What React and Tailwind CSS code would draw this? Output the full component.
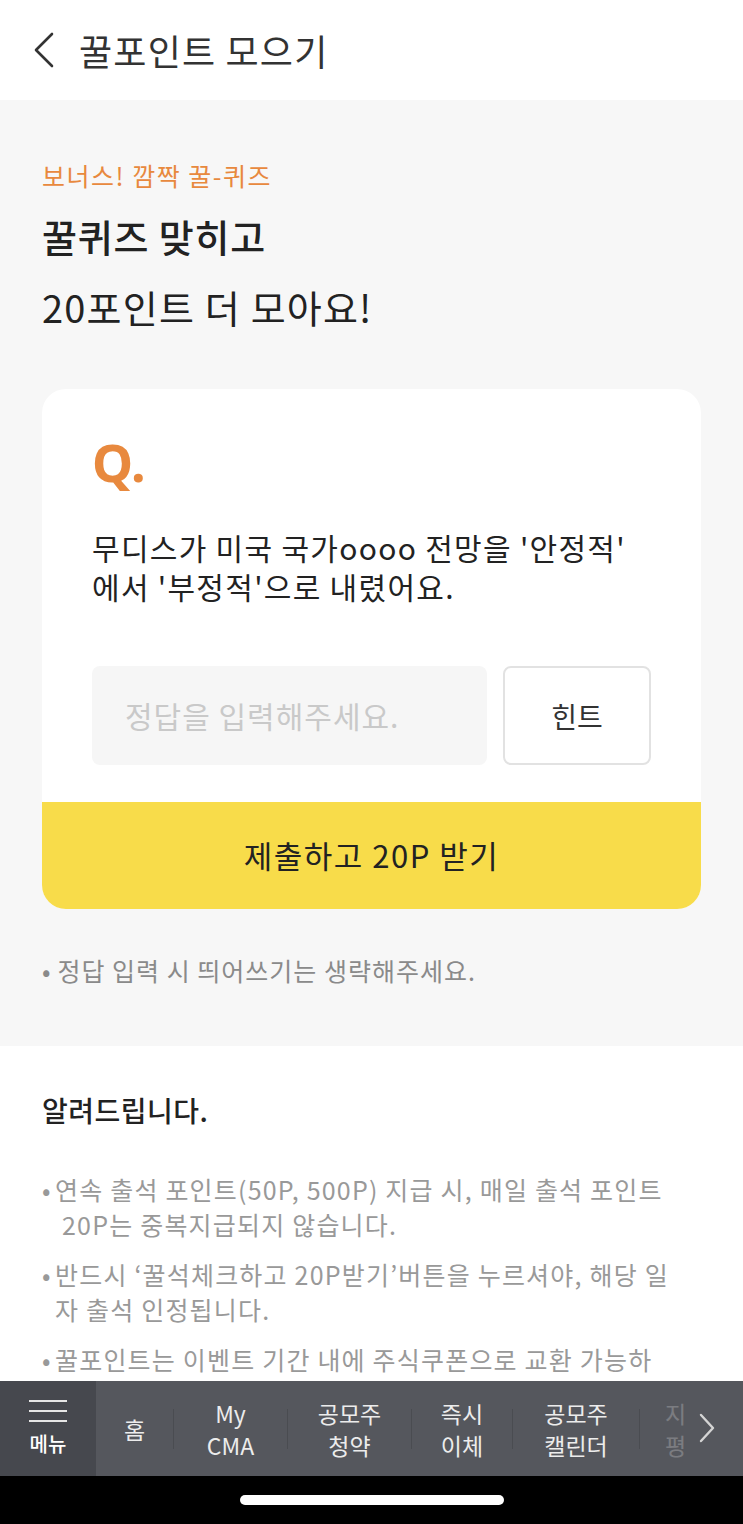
import React from "react";

const font = { fontFamily: '"Noto Sans CJK KR", "Noto Sans", sans-serif' };

function NavItem({ lines, width }) {
  return (
    <div className={`flex h-full items-center justify-center ${width}`}>
      <div className="flex flex-col items-center text-[23px] leading-[32px] text-[#ececec]">
        {lines.map((l, i) => (
          <span key={i}>{l}</span>
        ))}
      </div>
    </div>
  );
}

function Sep() {
  return <div className="h-[40px] w-px bg-[#4a4c51]" />;
}

export default function App() {
  return (
    <div className="flex h-[1524px] w-[743px] flex-col overflow-hidden bg-white" style={font}>
      <div className="flex-1 overflow-hidden">
        {/* Header */}
        <div className="flex h-[100px] items-center bg-white">
          <svg className="ml-[33px]" width="22" height="36" viewBox="0 0 22 36" fill="none">
            <path d="M19 2 L3 18 L19 34" stroke="#333" strokeWidth="2.6" strokeLinecap="round" strokeLinejoin="round" />
          </svg>
          <div className="ml-[24px] text-[36px] leading-[40px] text-[#333] tracking-[1.2px]">꿀포인트 모으기</div>
        </div>

        {/* Gray section */}
        <div className="bg-[#f7f7f7] px-[42px] pt-[57px] pb-[58px]">
          <div className="text-[25px] leading-[36px] text-[#e8893e] tracking-[1.5px]">보너스! 깜짝 꿀-퀴즈</div>
          <div className="mt-[19px] text-[38px] leading-[48px] font-medium text-[#222] tracking-[0.8px]">꿀퀴즈 맞히고</div>
          <div className="mt-[23px] text-[38px] leading-[48px] text-[#222] tracking-[1.2px]">20포인트 더 모아요!</div>

          <div className="mt-[58px] overflow-hidden rounded-[24px] bg-white">
            <div className="px-[50px] pt-[43px]">
              <div className="text-[52px] leading-[60px] font-bold text-[#e8893e]" style={{ fontFamily: '"Noto Sans", sans-serif' }}>Q.</div>
              <div className="mt-[36px] text-[30px] leading-[39px] text-[#222] tracking-[1.3px]">
                <div className="whitespace-nowrap">무디스가 미국 국가oooo 전망을 '안정적'</div>
                <div className="whitespace-nowrap">에서 '부정적'으로 내렸어요.</div>
              </div>
              <div className="mt-[60px] flex h-[99px] gap-[16px]">
                <div className="flex flex-1 items-center rounded-[8px] bg-[#f6f6f6] pl-[33px] text-[30px] text-[#c9c9c9] tracking-[1px]">정답을 입력해주세요.</div>
                <div className="flex w-[148px] items-center justify-center rounded-[8px] border-2 border-[#e2e2e2] bg-white text-[28px] text-[#333]">힌트</div>
              </div>
            </div>
            <div className="mt-[37px] flex h-[107px] items-center justify-center bg-[#f8dc4a] text-[31px] text-[#222] tracking-[1.5px]">
              제출하고 20P 받기
            </div>
          </div>

          <div className="mt-[43px] flex text-[25px] leading-[36px] text-[#8a8a8a] tracking-[1px]">
            <span className="mr-[6px]">•</span>
            <span>정답 입력 시 띄어쓰기는 생략해주세요.</span>
          </div>
        </div>

        {/* White notice section */}
        <div className="bg-white px-[42px] pt-[45px]">
          <div className="text-[28px] leading-[38px] font-medium text-[#222] tracking-[0.5px]">알려드립니다.</div>
          <div className="mt-[43px] flex flex-col gap-[15px] text-[25px] leading-[35px] text-[#999] tracking-[1.2px]">
            <div className="flex">
              <span className="w-[13px] shrink-0">•</span>
              <div>
                <div className="whitespace-nowrap">연속 출석 포인트(50P, 500P) 지급 시, 매일 출석 포인트</div>
                <div className="whitespace-nowrap pl-[7px]">20P는 중복지급되지 않습니다.</div>
              </div>
            </div>
            <div className="flex">
              <span className="w-[13px] shrink-0">•</span>
              <div>
                <div className="whitespace-nowrap">반드시 ‘꿀석체크하고 20P받기’버튼을 누르셔야, 해당 일</div>
                <div className="whitespace-nowrap">자 출석 인정됩니다.</div>
              </div>
            </div>
            <div className="flex">
              <span className="w-[13px] shrink-0">•</span>
              <div>
                <div className="whitespace-nowrap">꿀포인트는 이벤트 기간 내에 주식쿠폰으로 교환 가능하</div>
                <div className="whitespace-nowrap">며, 기간 종료 후 소멸됩니다.</div>
              </div>
            </div>
          </div>
        </div>
      </div>

      {/* Bottom nav */}
      <div className="flex h-[95px] shrink-0 items-center bg-[#55575d]">
        <div className="flex h-full w-[96px] shrink-0 flex-col items-center justify-center bg-[#46484e]">
          <div className="flex flex-col gap-[8px]">
            <div className="h-[2px] w-[38px] bg-[#e6e6e6]" />
            <div className="h-[2px] w-[38px] bg-[#e6e6e6]" />
            <div className="h-[2px] w-[38px] bg-[#e6e6e6]" />
          </div>
          <div className="mt-[9px] text-[20px] leading-[26px] font-medium text-white">메뉴</div>
        </div>
        <NavItem lines={["홈"]} width="w-[77px]" />
        <Sep />
        <NavItem lines={["My", "CMA"]} width="w-[113px]" />
        <Sep />
        <NavItem lines={["공모주", "청약"]} width="w-[123px]" />
        <Sep />
        <NavItem lines={["즉시", "이체"]} width="w-[100px]" />
        <Sep />
        <NavItem lines={["공모주", "캘린더"]} width="w-[126px]" />
        <Sep />
        <div className="relative flex h-full flex-1 items-center overflow-hidden">
          <div className="ml-[25px] flex flex-col text-[23px] leading-[32px] text-[#ececec] opacity-25">
            <span>지수</span>
            <span>평가</span>
          </div>
          <div className="absolute top-0 bottom-0 left-[46px] right-0 bg-[#55575d]" />
          <svg className="absolute right-[28px] top-[32px]" width="16" height="30" viewBox="0 0 16 30" fill="none">
            <path d="M2 2 L14 15 L2 28" stroke="#d4d4d4" strokeWidth="2.4" strokeLinecap="round" strokeLinejoin="round" />
          </svg>
        </div>
      </div>

      {/* Home indicator */}
      <div className="flex h-[48px] shrink-0 items-center justify-center bg-black">
        <div className="h-[10px] w-[264px] rounded-full bg-white" />
      </div>
    </div>
  );
}
